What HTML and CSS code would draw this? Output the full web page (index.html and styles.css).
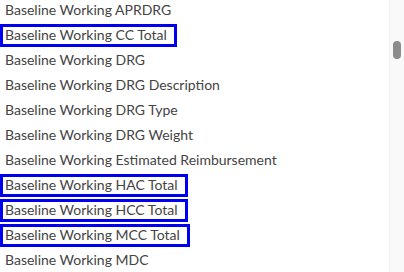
FILE: index.html
```html
<!DOCTYPE html>
<html>
<head>
<meta charset="utf-8">
<link rel="stylesheet" href="styles.css">
</head>
<body>
<div class="panel">
  <ul class="list">
    <li class="row"><span class="item">Baseline Working APRDRG</span></li>
    <li class="row"><span class="item sel">Baseline Working CC Total</span></li>
    <li class="row"><span class="item">Baseline Working DRG</span></li>
    <li class="row"><span class="item">Baseline Working DRG Description</span></li>
    <li class="row"><span class="item">Baseline Working DRG Type</span></li>
    <li class="row"><span class="item">Baseline Working DRG Weight</span></li>
    <li class="row"><span class="item">Baseline Working Estimated Reimbursement</span></li>
    <li class="row"><span class="item sel">Baseline Working HAC Total</span></li>
    <li class="row"><span class="item sel">Baseline Working HCC Total</span></li>
    <li class="row"><span class="item sel">Baseline Working MCC Total</span></li>
    <li class="row"><span class="item">Baseline Working MDC</span></li>
  </ul>
  <div class="track"><div class="thumb"></div></div>
</div>
</body>
</html>
```
FILE: styles.css
```css
html, body {
  margin: 0;
  padding: 0;
  background: #ffffff;
}
.panel {
  display: flex;
  width: 404px;
  height: 272px;
  overflow: hidden;
}
.list {
  flex: 1;
  list-style: none;
  margin: -1px 0 0 0;
  padding: 0;
  font-family: Lato, "Liberation Sans", sans-serif;
  font-size: 14px;
  color: #444444;
}
.row {
  height: 25px;
}
.item {
  display: inline-block;
  height: 16px;
  line-height: 15px;
  padding: 0 7px 1px 2px;
  border: 3px solid transparent;
  white-space: nowrap;
}
.item.sel {
  border-color: #0000f0;
}
.track {
  width: 15px;
  height: 272px;
  background: #f9f9f9;
  border-left: 1px solid #f1f1f1;
  box-sizing: border-box;
  display: flex;
  justify-content: center;
}
.thumb {
  width: 8px;
  height: 18px;
  margin-top: 41px;
  border-radius: 4px;
  background: #8c8c8c;
}
```
